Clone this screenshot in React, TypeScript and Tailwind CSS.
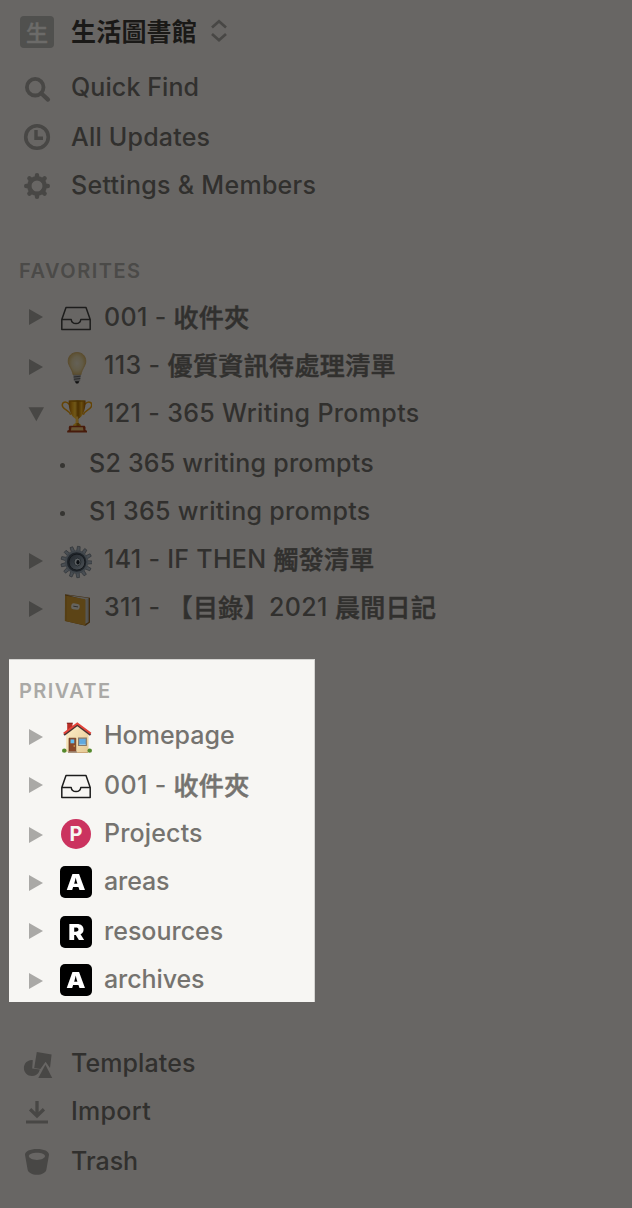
import type { ReactNode } from "react";

function Disclosure({ open = false, className = "" }: { open?: boolean; className?: string }) {
  return (
    <svg viewBox="0 0 16 16" className={`h-4 w-4 shrink-0 fill-current ${className}`}>
      <path d={open ? "M0.5 1.2H16L8.3 15.2Z" : "M1 0L15 8L1 16Z"} />
    </svg>
  );
}

function SearchIcon() {
  return (
    <svg viewBox="0 0 28 28" className="h-7 w-7" fill="none" stroke="currentColor">
      <circle cx="12.2" cy="12.2" r="8.3" strokeWidth="3.8" />
      <path d="M18.2 18.2L25 24.6" strokeWidth="4.2" strokeLinecap="round" />
    </svg>
  );
}

function ClockIcon() {
  return (
    <svg viewBox="0 0 28 28" className="h-7 w-7" fill="none" stroke="currentColor">
      <circle cx="14" cy="14" r="11.3" strokeWidth="3.6" />
      <path d="M13 7V15.3H20" strokeWidth="3.4" />
    </svg>
  );
}

function SettingsIcon() {
  return (
    <svg viewBox="0 0 28 28" className="h-7 w-7">
      <g stroke="currentColor" strokeWidth="4.4" strokeLinecap="round">
        <path d="M14 3.2V6M14 22V24.8M3.2 14H6M22 14H24.8M6.4 6.4L8.4 8.4M19.6 19.6L21.6 21.6M6.4 21.6L8.4 19.6M19.6 8.4L21.6 6.4" />
      </g>
      <circle cx="14" cy="14" r="7.7" fill="none" stroke="currentColor" strokeWidth="4.4" />
    </svg>
  );
}

function TemplatesIcon() {
  return (
    <svg viewBox="0 0 30 28" className="h-7 w-[30px] fill-current">
      <path d="M9.8 9.2C4.9 8.5.9 12.4.9 17.1C.9 21.6 4.5 25.1 9 25.1C12 25.1 14.5 23.5 15.8 21.3L16.9 18.5L9.2 17.4Z" />
      <path d="M13.8 1L28.6 3.5L27 17L22.6 10.8L17.4 18L11.2 16.9Z" />
      <path d="M22.4 13.8L29.2 27H15.3Z" />
    </svg>
  );
}

function ImportIcon() {
  return (
    <svg viewBox="0 0 28 28" className="h-7 w-7" fill="none" stroke="currentColor">
      <path d="M14 3V18M7.1 11.3L14 18L20.9 11.3" strokeWidth="3.3" />
      <path d="M3 24H25" strokeWidth="3" />
    </svg>
  );
}

function TrashIcon() {
  return (
    <svg viewBox="0 0 28 28" className="h-7 w-7 fill-current">
      <path fillRule="evenodd" d="M14 1C7 1 2 3.4 2 6.8L4.6 21.5C5.2 24.7 9.2 26.8 14 26.8S22.8 24.7 23.4 21.5L26 6.8C26 3.4 21 1 14 1ZM14 4.7C18.6 4.7 22 6.2 22 8.1S18.6 12 14 12S5.8 10 5.8 8.1S9.4 4.7 14 4.7Z" />
    </svg>
  );
}

function Inbox() {
  return (
    <svg viewBox="0 0 32 34" className="h-[34px] w-8" fill="none" stroke="#1d1d1c" strokeWidth="1.5" strokeLinejoin="round">
      <path d="M1.8 18.5L6 6.6H26L30.2 18.5V28.4H1.8ZM1.8 18.5H11.2C11.5 21 13.4 22.6 16 22.6S20.5 21 20.8 18.5H30.2" />
    </svg>
  );
}

function Bulb() {
  return (
    <svg viewBox="0 0 32 34" className="h-[34px] w-8 brightness-[0.42]">
      <defs>
        <radialGradient id="bulb-glass" cx=".5" cy=".48" r=".55">
          <stop offset="0" stopColor="#eee6cf" />
          <stop offset=".55" stopColor="#e9d9a9" />
          <stop offset="1" stopColor="#d7b466" />
        </radialGradient>
      </defs>
      <path d="M17 1.5C11.5 1.5 8.2 5.2 8.2 10.3C8.2 14.7 11.8 17.3 13.2 24H20.8C22.2 17.3 25.8 14.7 25.8 10.3C25.8 5.2 22.5 1.5 17 1.5Z" fill="url(#bulb-glass)" stroke="#d4af60" strokeWidth=".8" />
      <path d="M13.4 23.8H20.7L20.2 29.2L18.8 31.7H15.5L13.8 29.2Z" fill="#b5b5b5" />
      <path d="M13.6 26L20.6 25.2M13.9 28.3L20.3 27.5" stroke="#686868" strokeWidth="1" />
      <path d="M15 30.2H19.2L18.2 32.4H16Z" fill="#292929" />
    </svg>
  );
}

function Trophy() {
  return (
    <svg viewBox="0 0 32 34" className="h-[34px] w-8 brightness-[0.46]">
      <defs>
        <linearGradient id="trophy-gold">
          <stop stopColor="#a86400" />
          <stop offset=".23" stopColor="#dfa019" />
          <stop offset=".38" stopColor="#f5bf33" />
          <stop offset=".55" stopColor="#9f6500" />
          <stop offset=".76" stopColor="#e4a923" />
          <stop offset="1" stopColor="#995500" />
        </linearGradient>
      </defs>
      <g fill="none" stroke="#dc950c" strokeWidth="1.6">
        <path d="M9.5 5.5C5 .8.5 3.8 3 8.2C5 11.4 8.5 10.6 10.7 15.8" />
        <path d="M24.5 5.5C29 .8 33.5 3.8 31 8.2C29 11.4 25.5 10.6 23.3 15.8" />
      </g>
      <path d="M8.7 1.5H25.5C26 9.8 23 17.3 18.3 20V23.7L20.8 25.8V27H13.2V25.8L15.8 23.7V20C11 17.3 8.2 9.8 8.7 1.5Z" fill="url(#trophy-gold)" />
      <path d="M15.8 17.5H18.2V24H15.8Z" fill="#f2bb42" />
      <ellipse cx="17.1" cy="2" rx="8.3" ry=".8" fill="#a46c00" />
      <path d="M9.6 26.8H24.6L25.5 28V31L27 31.8V33.5H7.2V31.8L8.8 31V28Z" fill="#9b3b17" />
      <path d="M11.5 28.2H22.9L23.5 31.6H10.9Z" fill="#dfb66d" />
    </svg>
  );
}

function SteelGear() {
  const teeth = Array.from({ length: 13 }, (_, i) => 8 + (i * 360) / 13);
  return (
    <svg viewBox="0 0 32 34" className="h-[34px] w-8 brightness-[0.43]">
      <defs>
        <linearGradient id="gear-face" x2="1" y2="1">
          <stop stopColor="#4c5864" />
          <stop offset=".5" stopColor="#7b8997" />
          <stop offset="1" stopColor="#bac5ce" />
        </linearGradient>
      </defs>
      {teeth.map((angle) => (
        <path key={angle} d="M15 7L15.3 1.3H18L18.6 7Z" fill="#aab5c0" stroke="#4d5863" strokeWidth=".5" transform={`rotate(${angle} 16.6 17)`} />
      ))}
      <circle cx="16.6" cy="17" r="10.7" fill="#475360" stroke="#93a0ac" strokeWidth="1.9" />
      <circle cx="16.9" cy="17.1" r="8" fill="url(#gear-face)" stroke="#303942" strokeWidth="1" />
      <ellipse cx="17.5" cy="17" rx="3.4" ry="3.9" fill="#d7dfe4" stroke="#455460" strokeWidth=".8" />
      <ellipse cx="18" cy="17.2" rx="1.6" ry="2.2" fill="#1c242c" />
    </svg>
  );
}

function Ledger() {
  return (
    <svg viewBox="0 0 32 34" className="h-[34px] w-8 brightness-[0.43]">
      <path d="M5 1.2L30 4.7V29.5L25.5 32.8L5.3 28Z" fill="#94631e" />
      <path d="M7 2L28.5 5V29L25.2 31V7Z" fill="#d8d7d2" />
      <path d="M27 6V30M28.2 5.2V29" stroke="#959590" strokeWidth=".5" />
      <path d="M5 2.5L25.4 6.3V32.5L4.8 27.9Z" fill="#d59d34" />
      <path d="M6 3V28" stroke="#c08b2d" strokeWidth="1.2" />
      <rect x="11.2" y="10.6" width="8.5" height="6" rx="2.3" fill="#ece8dc" transform="rotate(8 15.6 13.6)" />
      <path d="M13.3 13.2L18 13.9" stroke="#767169" />
    </svg>
  );
}

function House() {
  return (
    <svg viewBox="0 0 32 34" className="h-[34px] w-8">
      <defs>
        <linearGradient id="house-wall" x2="1" y2="1">
          <stop stopColor="#fff0ca" />
          <stop offset="1" stopColor="#e5c893" />
        </linearGradient>
      </defs>
      <path d="M7.2 2H12.5V9L7.2 12.5Z" fill="#b92d26" />
      <path d="M6.8 2.2H12.8" stroke="#7d1f1b" />
      <path d="M6.2 13L17.3 4L28.5 13V31H6.2Z" fill="url(#house-wall)" />
      <path d="M4 13.8L17.3 3.8L30.6 13.8" fill="none" stroke="#493332" strokeWidth="2.2" />
      <path d="M3.8 12.5L17.3 2.4L30.8 12.5" fill="none" stroke="#e44339" strokeWidth="2" />
      <path d="M9 17.2H15.8V31H9Z" fill="#8a4829" stroke="#63351f" strokeWidth=".7" />
      <path d="M10.5 18.4H14.3V22.3H10.5Z" fill="#61bdf0" />
      <circle cx="14.2" cy="25" r=".7" fill="#f2c35d" />
      <path d="M18.6 17.2H26.3V24.3H18.6Z" fill="#61a9df" stroke="#86796b" strokeWidth="1.2" />
      <path d="M19.3 23.4H25.7" stroke="#a8d5ed" strokeWidth=".8" />
      <path d="M8 30.3H17V32H8Z" fill="#a9947e" />
      <path d="M17 31H28V32H17Z" fill="#cda778" />
      <ellipse cx="4.3" cy="29.7" rx="2.3" ry="2.1" fill="#55892d" />
      <ellipse cx="29.7" cy="29.7" rx="2.3" ry="2.1" fill="#55892d" />
    </svg>
  );
}

function LetterBadge({ letter, round = false }: { letter: string; round?: boolean }) {
  return (
    <span className={round
      ? "flex h-[30px] w-[30px] items-center justify-center rounded-full bg-[#cb335f] text-[20px] leading-none font-bold text-[#f7f6f3]"
      : "flex h-8 w-8 items-center justify-center rounded-[5px] bg-black text-[22px] leading-none font-black text-white"}>
      <span className={round ? "" : "scale-x-110"}>{letter}</span>
    </span>
  );
}

function Han({ children }: { children: ReactNode }) {
  return <span className="inline-block translate-y-px leading-none [-webkit-text-stroke:0.5px]">{children}</span>;
}

function NavRow({ icon, children, className = "h-12", offset = "pt-[11px]" }: { icon: ReactNode; children: ReactNode; className?: string; offset?: string }) {
  return (
    <div className={`flex items-start pl-[23px] ${className}`}>
      <span className={`flex w-12 shrink-0 text-[#484745] ${offset}`}>{icon}</span>
      <span className="leading-[48px] whitespace-nowrap">{children}</span>
    </div>
  );
}

type PageRowProps = {
  icon: ReactNode;
  children: ReactNode;
  className?: string;
  arrow?: string;
  iconOffset?: string;
  open?: boolean;
  light?: boolean;
};

function PageRow({ icon, children, className = "h-12", arrow = "mt-[18px]", iconOffset = "pt-[10px]", open, light }: PageRowProps) {
  return (
    <div className={`flex items-start ${className}`}>
      <span className={`flex w-8 shrink-0 ${light ? "text-[#aaa9a6]" : "text-[#484745]"}`}>
        <Disclosure open={open} className={arrow} />
      </span>
      <span className={`flex w-8 shrink-0 justify-center ${iconOffset}`}>{icon}</span>
      <span className="ml-3 leading-[48px] whitespace-nowrap">{children}</span>
    </div>
  );
}

function SubPage({ children, className = "h-12" }: { children: ReactNode; className?: string }) {
  return (
    <div className={`flex items-start pl-8 ${className}`}>
      <span className="mt-6 h-[5px] w-[5px] shrink-0 rounded-full bg-[#363532]" />
      <span className="ml-6 leading-[48px] whitespace-nowrap">{children}</span>
    </div>
  );
}

export default function App() {
  return (
    <main className="flex h-[1208px] w-[632px] flex-col overflow-hidden bg-[#686664] font-['Inter','Noto_Sans_CJK_TC',sans-serif] text-[25px] font-medium text-[#31302e]">
      <header className="flex h-[63px] shrink-0 items-start pl-5">
        <span className="mt-4 flex h-8 w-[34px] items-center justify-center rounded-[4px] bg-[#50504e] text-[22px] leading-none text-[#6c6b69]">
          <Han>生</Han>
        </span>
        <strong className="ml-[17px] text-[25px] leading-[64px] font-bold tracking-[0.2px] text-[#1a1917]">生活圖書館</strong>
        <svg viewBox="0 0 18 24" className="mt-[19px] ml-[13px] h-6 w-[18px] fill-none stroke-[#484745] stroke-[2.7]">
          <path d="M2 8.5L9 2.2L16 8.5M2 15L9 21.3L16 15" />
        </svg>
      </header>
      <nav className="h-[196px] shrink-0">
        <NavRow icon={<SearchIcon />} className="h-[50px]" offset="pt-3"><span className="tracking-[0.1px]">Quick Find</span></NavRow>
        <NavRow icon={<ClockIcon />} offset="pt-[10px]"><span className="tracking-[0.2px]">All Updates</span></NavRow>
        <NavRow icon={<SettingsIcon />}><span className="tracking-[0.29px]">Settings &amp; Members</span></NavRow>
      </nav>
      <section className="h-[400px] shrink-0">
        <h2 className="h-[34px] pl-[19px] text-[20px] leading-6 font-semibold tracking-[1.5px] text-[#4b4a48]">FAVORITES</h2>
        <div className="pl-7">
          <PageRow icon={<Inbox />} arrow="mt-4" iconOffset="pt-2"><span className="tracking-[0.33px]">001 - <Han>收件夾</Han></span></PageRow>
          <PageRow icon={<Bulb />}><span className="tracking-[0.37px]">113 - <Han>優質資訊待處理清單</Han></span></PageRow>
          <PageRow icon={<Trophy />} open className="h-[50px]" arrow="mt-[17px]"><span className="tracking-[0.35px]">121 - 365 Writing Prompts</span></PageRow>
          <SubPage><span className="tracking-[0.23px]">S2 365 writing prompts</span></SubPage>
          <SubPage><span className="tracking-[0.3px]">S1 365 writing prompts</span></SubPage>
          <PageRow icon={<SteelGear />}><span className="tracking-[0.3px]">141 - IF THEN <Han>觸發清單</Han></span></PageRow>
          <PageRow icon={<Ledger />}><span className="tracking-[0.37px]">311 - <Han>【目錄】</Han>2021 <Han>晨間日記</Han></span></PageRow>
        </div>
      </section>
      <section className="ml-[9px] h-[343px] w-[306px] shrink-0 overflow-hidden bg-[#f7f6f3] text-[#75736f] shadow-[inset_-1px_1px_0_#d5d4d1]">
        <h2 className="h-[52px] pt-5 pl-[10px] text-[20px] leading-6 font-semibold tracking-[1.4px] text-[#aaa9a6]">PRIVATE</h2>
        <div className="pl-[19px]">
          <PageRow light icon={<House />} className="h-[50px]">Homepage</PageRow>
          <PageRow light icon={<Inbox />} arrow="mt-4" iconOffset="pt-2"><span className="tracking-[0.33px]">001 - <Han>收件夾</Han></span></PageRow>
          <PageRow light icon={<LetterBadge letter="P" round />}><span className="tracking-[0.15px]">Projects</span></PageRow>
          <PageRow light icon={<LetterBadge letter="A" />} className="h-[50px]" iconOffset="pt-[9px]"><span className="tracking-[-0.1px]">areas</span></PageRow>
          <PageRow light icon={<LetterBadge letter="R" />} arrow="mt-4" iconOffset="pt-[9px]">resources</PageRow>
          <PageRow light icon={<LetterBadge letter="A" />} iconOffset="pt-[9px]"><span className="tracking-[-0.1px]">archives</span></PageRow>
        </div>
      </section>
      <nav className="pt-[37px]">
        <NavRow icon={<TemplatesIcon />} offset="pt-3"><span className="tracking-[0.1px]">Templates</span></NavRow>
        <NavRow icon={<ImportIcon />} className="h-[50px]"><span className="tracking-[0.3px]">Import</span></NavRow>
        <NavRow icon={<TrashIcon />}>Trash</NavRow>
      </nav>
    </main>
  );
}
